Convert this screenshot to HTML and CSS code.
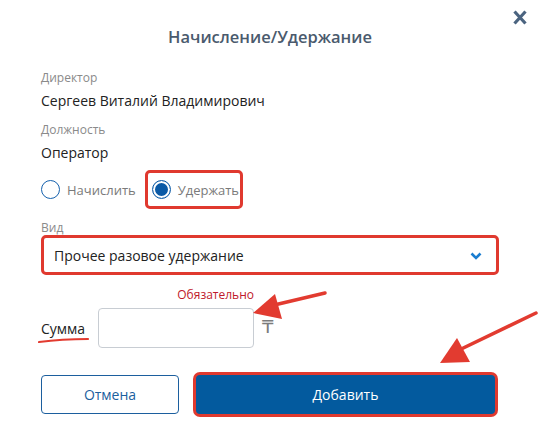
FILE: index.html
```html
<!DOCTYPE html>
<html lang="ru">
<head>
<meta charset="utf-8">
<link rel="stylesheet" href="styles.css">
</head>
<body>
<div class="dialog">
  <button class="close" aria-label="Закрыть">
    <svg width="14" height="15" viewBox="0 0 14 15"><path d="M1.5 1.5 L12.5 13.5 M12.5 1.5 L1.5 13.5" stroke="#4b6480" stroke-width="3.2" stroke-linecap="butt" fill="none"/></svg>
  </button>
  <h1 class="title">Начисление/Удержание</h1>
  <div class="body">
    <div class="label first">Директор</div>
    <div class="value">Сергеев Виталий Владимирович</div>
    <div class="label">Должность</div>
    <div class="value">Оператор</div>
    <div class="radios">
      <label class="radio"><span class="dot"></span><span class="rtext">Начислить</span></label>
      <label class="radio checked marked"><span class="dot"></span><span class="rtext">Удержать</span></label>
    </div>
    <div class="label kind">Вид</div>
    <div class="select">
      <span>Прочее разовое удержание</span>
      <svg class="chev" width="12" height="8" viewBox="0 0 12 8"><path d="M1.5 1.5 L6 6 L10.5 1.5" stroke="#1a7dd0" stroke-width="2.6" fill="none"/></svg>
    </div>
    <div class="sum-block">
      <div class="required">Обязательно</div>
      <div class="sum-row">
        <span class="sum-label">Сумма</span>
        <div class="sum-input"></div>
        <span class="tenge">₸</span>
      </div>
    </div>
    <div class="buttons">
      <button class="btn cancel">Отмена</button>
      <button class="btn add">Добавить</button>
    </div>
  </div>
  <svg class="annot" width="540" height="444" viewBox="0 0 540 444">
    <path d="M39 342 Q62 339 88 339" stroke="#e23b30" stroke-width="2.2" fill="none" stroke-linecap="round"/>
    <path d="M325 293 L270 306" stroke="#e23b30" stroke-width="3.5" fill="none" stroke-linecap="round"/>
    <polygon points="253,313 275,294 282,319" fill="#e23b30"/>
    <path d="M536 313 L455 352" stroke="#e23b30" stroke-width="3.5" fill="none" stroke-linecap="round"/>
    <polygon points="440,363 457,338 470,362" fill="#e23b30"/>
  </svg>
</div>
</body>
</html>
```

FILE: styles.css
```css
* { box-sizing: border-box; }
html, body { margin: 0; padding: 0; background: #fff; }
body { font-family: "Open Sans", "Noto Sans", sans-serif; color: #222; }

.dialog {
  position: relative;
  width: 540px;
  height: 444px;
  overflow: hidden;
}

.close {
  position: absolute;
  top: 10px;
  right: 13px;
  width: 14px;
  height: 15px;
  padding: 0;
  border: 0;
  background: none;
  display: flex;
}

.title {
  margin: 0;
  padding-top: 26px;
  text-align: center;
  font-size: 16.5px;
  line-height: 22px;
  font-weight: 600;
  color: #4a5a6d;
}

.body {
  padding: 0 41px 0 41px;
}

.label {
  font-size: 12px;
  line-height: 16px;
  color: #8a8a8a;
  margin-top: 11px;
}
.label.first { margin-top: 22px; }

.value {
  font-size: 14px;
  line-height: 20px;
  color: #222;
  margin-top: 5px;
}

.radios {
  display: flex;
  align-items: center;
  margin-top: 7px;
  height: 39px;
}
.radio {
  display: flex;
  align-items: center;
  gap: 7px;
  height: 39px;
  font-size: 13px;
  color: #7a7a7a;
}
.radio .dot {
  width: 19px;
  height: 19px;
  border-radius: 50%;
  border: 1.5px solid #1561ad;
  background: #fff;
  flex: none;
}
.radio.checked .dot {
  border: 1.5px solid #0b5aa6;
  box-shadow: inset 0 0 0 2px #fff, inset 0 0 0 10px #0b5aa6;
}
.radio.marked {
  margin-left: 9px;
  border: 3px solid #e0392f;
  border-radius: 5px;
  padding: 0 8px 0 4px;
  width: 98px;
}

.label.kind {
  margin-top: 12px;
  line-height: 14px;
}

.select {
  height: 40px;
  width: 458px;
  border: 3px solid #e0392f;
  border-radius: 5px;
  display: flex;
  align-items: center;
  justify-content: space-between;
  padding: 0 14px 0 10px;
  font-size: 14px;
  color: #222;
}
.chev { margin-top: 1px; }

.sum-block {
  width: 213px;
  margin-top: 12px;
}
.required {
  text-align: right;
  font-size: 12px;
  line-height: 16px;
  color: #c0182b;
}
.sum-row {
  display: flex;
  align-items: center;
  margin-top: 5px;
}
.sum-label {
  font-size: 14px;
  color: #222;
  width: 57px;
  flex: none;
}
.sum-input {
  width: 156px;
  height: 40px;
  border: 1px solid #c8cdd3;
  border-radius: 4px;
  flex: none;
}
.tenge {
  margin-left: 8px;
  font-size: 18px;
  color: #7c7c7c;
  margin-top: -4px;
  font-family: "DejaVu Sans", sans-serif;
}

.buttons {
  display: flex;
  margin-top: 27px;
  gap: 18px;
}
.btn {
  height: 39px;
  border-radius: 4px;
  font-family: "Open Sans", "Noto Sans", sans-serif;
  font-size: 14px;
  cursor: pointer;
}
.btn.cancel {
  width: 138px;
  background: #fff;
  border: 1px solid #1c5f9e;
  color: #1c5f9e;
}
.btn.add {
  width: 299px;
  margin-left: -1px;
  background: #035a9e;
  border: 0;
  color: #fff;
  box-shadow: 0 0 0 3px #e0392f;
}

.annot {
  position: absolute;
  left: 0;
  top: 0;
  pointer-events: none;
}
```
